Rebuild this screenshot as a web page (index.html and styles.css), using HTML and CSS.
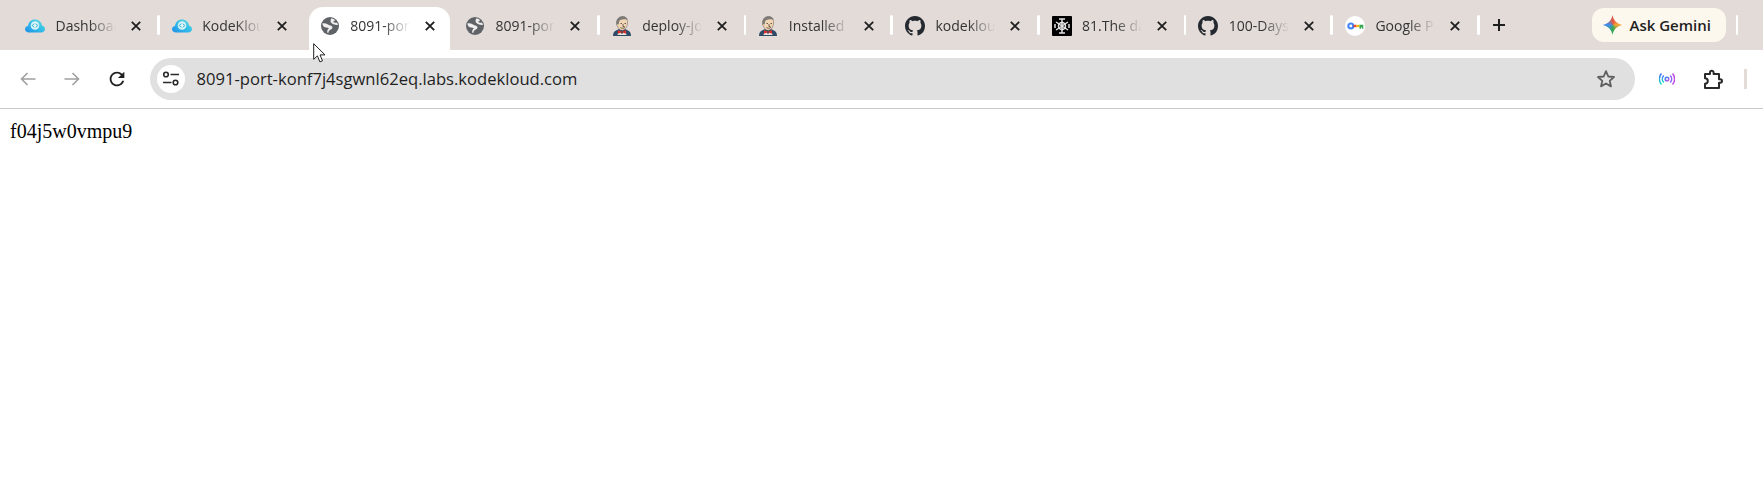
FILE: index.html
```html
<!DOCTYPE html>
<html lang="en">
<head>
<meta charset="utf-8">
<title>8091-port</title>
<link rel="stylesheet" href="styles.css">
</head>
<body>
<svg class="defs" width="0" height="0" aria-hidden="true">
  <defs>
    <linearGradient id="cloudGrad" x1="0" y1="1" x2="1" y2="0">
      <stop offset="0" stop-color="#1d8fe8"/>
      <stop offset="0.55" stop-color="#35c0e8"/>
      <stop offset="1" stop-color="#66dcd8"/>
    </linearGradient>
    <linearGradient id="castGrad" x1="0" y1="0" x2="1" y2="1">
      <stop offset="0" stop-color="#2f8cf0"/>
      <stop offset="0.5" stop-color="#6a6cf0"/>
      <stop offset="1" stop-color="#e05ae0"/>
    </linearGradient>
    <linearGradient id="castGradL" x1="0" y1="0" x2="0" y2="1">
      <stop offset="0" stop-color="#4a70f8"/>
      <stop offset="1" stop-color="#10e0c8"/>
    </linearGradient>
    <symbol id="cloud" viewBox="0 0 20 14">
      <path fill="url(#cloudGrad)" d="M4 13.500C1.800 13.500 0 12 0 10.200 0 8.500 1.300 7.200 3 7 3.300 3.200 6.300 .5 10 .5c3.700 0 6.500 2.500 7 6 1.700.3 3 1.800 3 3.500 0 2-1.800 3.500-4 3.500z"/>
      <circle cx="10" cy="6.500" r="4.300" fill="#d5f2f6"/>
      <path d="M9 4.700 7.400 6.500 9 8.300M11 4.700l1.600 1.800L11 8.300" fill="none" stroke="#2aa8d8" stroke-width="1"/>
    </symbol>
    <symbol id="globe" viewBox="0 0 20 20">
      <circle cx="10" cy="10" r="9" fill="#5f6368"/>
      <path fill="#f0eeee" d="M2.300 7.500C4 6.800 6 7.300 8 8.500c1.700 1 3.500 1.200 4.300 2.300.6 1-.2 2.300-1.500 2.800-1.400.5-2.200 1.500-2.300 3.200-.6 0-1-.2-1.400-.4.100-2 .7-3.500 1.900-4.200C7.200 11.400 5 11.800 3.600 10.500 3 9.800 2.500 8.700 2.300 7.500zM11.500 2.200c1.400.3 2.500.9 3.500 1.800-.3 1-1.300 1.500-2.200 1.600.6.900 2 1.300 4.400 1.200.3.700.6 1.400.7 2.200-2.600.3-5.600-.5-6.900-2.400-.7-1.200-.5-3 .5-4.400z"/>
    </symbol>
    <symbol id="jenkins" viewBox="0 0 20 20">
      <path fill="#2f4a66" d="M1 20c0-3 1-5 4-6l2-1h6l2 1c3 1 4 3 4 6z"/>
      <path fill="#e9e4da" d="M6.500 14.500 10 18l3.500-3.500 1 4.500h-9z"/>
      <path fill="#e0302c" d="M6 14.200 10 15.800l4-1.600v3.600l-4-1.600-4 1.600z"/>
      <path fill="#f0d6b5" stroke="#6a5a50" stroke-width=".5" d="M4.500 8c0-4.500 2.500-7.500 6-7.500 3.500 0 5.500 2.800 5 6.500-.3 3-1.500 7-5 7.300C7.500 14.500 6 12 5.500 10 4.800 10 4.500 9 4.500 8z"/>
      <path fill="#7d7b78" d="M4.500 8.500C3.500 4 6.500.3 10.500.3c2.600 0 4.600 1.400 5.200 3.500C13 2.800 10 3.200 8 4.300 7 5 7 7 6.700 8.300z"/>
      <path fill="none" stroke="#4a3a32" stroke-width=".8" d="M8.500 7.500h1.500M12.500 7.500h1.500M11 8v2.500h1.500M8.500 11.500c1.500 1 3 1 4.500 0"/>
    </symbol>
    <symbol id="github" viewBox="0 0 16 16">
      <path fill="#24292f" d="M8 0C3.580 0 0 3.580 0 8c0 3.540 2.290 6.530 5.470 7.590.4.070.55-.17.55-.38 0-.19-.01-.82-.01-1.490-2.010.37-2.530-.49-2.690-.94-.09-.23-.48-.94-.82-1.130-.28-.15-.68-.52-.01-.53.63-.01 1.080.58 1.230.82.72 1.210 1.870.87 2.330.66.070-.52.28-.87.51-1.070-1.780-.2-3.640-.89-3.640-3.950 0-.87.31-1.590.82-2.150-.08-.2-.36-1.020.08-2.120 0 0 .67-.21 2.200.82.64-.18 1.320-.27 2-.27.68 0 1.360.09 2 .27 1.530-1.040 2.200-.82 2.200-.82.44 1.100.16 1.920.08 2.120.51.56.82 1.270.82 2.150 0 3.070-1.870 3.750-3.650 3.950.29.25.54.73.54 1.480 0 1.070-.01 1.930-.01 2.200 0 .21.15.46.55.38A8.013 8.013 0 0 0 16 8c0-4.420-3.580-8-8-8z"/>
    </symbol>
    <symbol id="x" viewBox="0 0 10 10">
      <path d="M.8.8l8.400 8.400M9.200.8.8 9.200" fill="none" stroke="#1f1f1f" stroke-width="1.800"/>
    </symbol>
  </defs>
</svg>

<header class="strip">
  <div class="tabs">
    <div class="tab"><svg class="fav"><use href="#cloud"/></svg><span class="title">Dashboard</span><span class="close"><svg class="x"><use href="#x"/></svg></span></div>
    <div class="tab no-sep"><svg class="fav"><use href="#cloud"/></svg><span class="title">KodeKloud</span><span class="close"><svg class="x"><use href="#x"/></svg></span></div>
    <div class="tab active no-sep"><svg class="fav"><use href="#globe"/></svg><span class="title">8091-port</span><span class="close"><svg class="x"><use href="#x"/></svg></span></div>
    <div class="tab"><svg class="fav"><use href="#globe"/></svg><span class="title">8091-port</span><span class="close"><svg class="x"><use href="#x"/></svg></span></div>
    <div class="tab"><svg class="fav"><use href="#jenkins"/></svg><span class="title">deploy-job</span><span class="close"><svg class="x"><use href="#x"/></svg></span></div>
    <div class="tab"><svg class="fav"><use href="#jenkins"/></svg><span class="title">Installed</span><span class="close"><svg class="x"><use href="#x"/></svg></span></div>
    <div class="tab"><svg class="fav"><use href="#github"/></svg><span class="title">kodekloud</span><span class="close"><svg class="x"><use href="#x"/></svg></span></div>
    <div class="tab">
      <svg class="fav" viewBox="0 0 20 20">
        <rect width="20" height="20" rx="1" fill="#000"/>
        <g fill="none" stroke="#e4e4e4" stroke-width="1.500">
          <path d="M10 3v14M4 6l12 8M16 6 4 14"/>
          <circle cx="10" cy="10" r="3.500"/>
          <path d="M7 3h6M3 8v4M17 8v4M7 17h6"/>
        </g>
      </svg>
      <span class="title">81.The day</span><span class="close"><svg class="x"><use href="#x"/></svg></span>
    </div>
    <div class="tab"><svg class="fav"><use href="#github"/></svg><span class="title">100-Days</span><span class="close"><svg class="x"><use href="#x"/></svg></span></div>
    <div class="tab">
      <svg class="fav" viewBox="0 0 20 20">
        <circle cx="10" cy="10" r="10" fill="#fff"/>
        <circle cx="5.800" cy="10" r="2.500" fill="none" stroke="#4285f4" stroke-width="2.200"/>
        <path d="M8.500 8.800h3v2.400h-3z" fill="#ea4335"/>
        <path d="M11.500 8.800h3v2.400h-3z" fill="#fbbc04"/>
        <path d="M14.500 8.800h3.800v4h-1.500v-1.600h-.8v1.600h-1.500z" fill="#34a853"/>
      </svg>
      <span class="title">Google Pass</span><span class="close"><svg class="x"><use href="#x"/></svg></span>
    </div>
  </div>
  <span class="new-tab">
    <svg viewBox="0 0 14 14" width="14" height="14"><path d="M7 1v12M1 7h12" stroke="#1f1f1f" stroke-width="2" fill="none"/></svg>
  </span>
  <button class="gemini"><span class="spark"></span><span>Ask Gemini</span></button>
  <span class="strip-sep"></span>
</header>

<nav class="toolbar">
  <span class="tool back">
    <svg viewBox="0 0 16 14" width="16" height="14"><path d="M15.500 7H1.500M7.500 1 1.500 7l6 6" fill="none" stroke="#a0a0a0" stroke-width="1.600"/></svg>
  </span>
  <span class="tool forward">
    <svg viewBox="0 0 16 14" width="16" height="14"><path d="M.5 7h14M8.500 1l6 6-6 6" fill="none" stroke="#a0a0a0" stroke-width="1.600"/></svg>
  </span>
  <span class="tool reload">
    <svg viewBox="0 0 24 24" width="22" height="22"><path fill="#1f1f1f" d="M17.650 6.350A7.958 7.958 0 0 0 12 4c-4.420 0-7.990 3.580-7.990 8s3.570 8 7.990 8c3.730 0 6.840-2.550 7.730-6h-2.080A5.990 5.990 0 0 1 12 18c-3.310 0-6-2.690-6-6s2.690-6 6-6c1.660 0 3.140.69 4.220 1.780L13 11h7V4l-2.350 2.350z"/></svg>
  </span>
  <div class="omnibox">
    <span class="site-info">
      <svg viewBox="0 0 18 16" width="18" height="16" fill="none" stroke="#2a2a2a" stroke-width="1.600">
        <circle cx="4" cy="3.500" r="2.300"/><path d="M8.500 3.500H17M1 11.500h8.500"/><circle cx="13.500" cy="11.500" r="2.300"/>
      </svg>
    </span>
    <span class="url">8091-port-konf7j4sgwnl62eq.labs.kodekloud.com</span>
    <svg class="star" viewBox="0 0 20 20" width="20" height="20"><path d="M10 2.200l2.300 5.300 5.700.5-4.300 3.800 1.300 5.600L10 14.500 5 17.400l1.300-5.600L2 8l5.700-.5z" fill="none" stroke="#5f5f5f" stroke-width="1.800" stroke-linejoin="round"/></svg>
  </div>
  <span class="tool cast">
    <svg viewBox="0 0 16 14" width="16" height="14" fill="none" stroke-width="1.500">
      <circle cx="8" cy="7" r="1.800" stroke="url(#castGrad)"/>
      <path d="M4.800 3.500a5 5 0 0 0 0 7" stroke="url(#castGradL)"/>
      <path d="M2.500 1.500a8.200 8.200 0 0 0 0 11" stroke="url(#castGradL)"/>
      <path d="M11.200 3.500a5 5 0 0 1 0 7" stroke="#8a60f4"/>
      <path d="M13.500 1.500a8.200 8.200 0 0 1 0 11" stroke="#c04ae8"/>
    </svg>
  </span>
  <span class="tool puzzle">
    <svg viewBox="0 0 22 21" width="22" height="21"><path d="M2 5h5V3.500a1.800 1.800 0 0 1 3.600 0V5h5.400v5.200h1.200a1.800 1.800 0 0 1 0 3.600H16V19H2v-4.300c1.600 0 2.800-1.100 2.800-2.700S3.600 9.300 2 9.300z" fill="none" stroke="#2a2a2a" stroke-width="2" stroke-linejoin="round"/></svg>
  </span>
  <span class="tool-sep"></span>
</nav>

<main class="page">f04j5w0vmpu9</main>

<svg class="cursor" viewBox="0 0 13 20" width="13" height="20"><path d="M.7.700v15.600l3.700-3.400 2.500 6 2.600-1.100-2.500-5.900h5z" fill="#fff" stroke="#222" stroke-width="1"/></svg>
</body>
</html>
```

FILE: styles.css
```css
* { box-sizing: border-box; }
html, body { margin: 0; padding: 0; background: #fff; overflow: hidden; }
body { position: relative; height: 492px; }
.defs { position: absolute; }

.strip {
  display: flex;
  align-items: flex-start;
  height: 50px;
  padding: 7px 0 0 12px;
  background: #e2dbd8;
  font-family: "Open Sans", "Noto Sans", sans-serif;
}
.tabs { display: flex; }
.tab {
  position: relative;
  display: flex;
  align-items: center;
  width: 146.67px;
  height: 43px;
  padding: 0 0 6px 13px;
  flex: none;
}
.tab::after {
  content: "";
  position: absolute;
  right: -1px;
  top: 8px;
  width: 2.500px;
  height: 20px;
  border-radius: 2px;
  background: #fff;
}
.tab.no-sep::after, .tab.active::after { display: none; }
.tab.active {
  background: #fff;
  border-radius: 14px 14px 0 0;
  margin: 0 2px 0 4px;
  width: 140.67px;
  padding-left: 10.500px;
}
.fav { width: 20px; height: 20px; flex: none; display: block; }
.title {
  width: 60px;
  margin: 0 10px 0 10.500px;
  flex: none;
  font-size: 14px;
  color: #333;
  white-space: nowrap;
  overflow: hidden;
  -webkit-mask-image: linear-gradient(to right, #000 55%, transparent 100%);
  mask-image: linear-gradient(to right, #000 55%, transparent 100%);
}
.close {
  display: flex;
  align-items: center;
  justify-content: center;
  width: 20px;
  flex: none;
}
.x { width: 10px; height: 10px; display: block; }
.new-tab {
  display: flex;
  width: 14px;
  height: 36px;
  align-items: center;
  margin-left: 13.500px;
  flex: none;
}
.gemini {
  display: flex;
  align-items: center;
  gap: 7px;
  width: 134px;
  height: 34px;
  margin: 1px 0 0 auto;
  padding: 0 0 0 11px;
  border: 0;
  border-radius: 12px;
  background: #fcf8ee;
  font: 600 15px "Open Sans", sans-serif;
  color: #1f1f1f;
  white-space: nowrap;
}
.spark {
  width: 20px;
  height: 20px;
  flex: none;
  background: conic-gradient(from 0deg, #e8563f, #f4a63a 25%, #34a853 50%, #3e8ef0 75%, #e8563f);
  clip-path: path("M10 0C11 5.500 14.500 9 20 10 14.500 11 11 14.500 10 20 9 14.500 5.500 11 0 10 5.500 9 9 5.500 10 0Z");
}
.strip-sep {
  width: 2.500px;
  height: 20px;
  margin: 8px 25px 0 10px;
  border-radius: 2px;
  background: #fff;
  flex: none;
}

.toolbar {
  display: flex;
  align-items: center;
  height: 59px;
  padding: 0 17px 0 0;
  background: #fff;
  border-top-left-radius: 12px;
  border-bottom: 1px solid #c9c9c9;
}
.tool { display: flex; align-items: center; justify-content: center; flex: none; }
.back { width: 16px; margin-left: 20px; }
.forward { width: 16px; margin-left: 28px; }
.reload { width: 22px; margin-left: 26px; }
.omnibox {
  display: flex;
  align-items: center;
  flex: none;
  width: 1485px;
  height: 42px;
  margin-left: 22px;
  padding: 0 19px 0 7px;
  border-radius: 21px;
  background: #e0e0e0;
}
.site-info {
  display: flex;
  align-items: center;
  justify-content: center;
  width: 28px;
  height: 28px;
  flex: none;
  border-radius: 50%;
  background: #fff;
}
.url {
  margin-left: 11.500px;
  padding-bottom: 2px;
  flex: 1;
  font-family: "Open Sans", sans-serif;
  font-size: 16.600px;
  color: #1f1f1f;
  white-space: nowrap;
}
.star { flex: none; }
.cast { width: 16px; margin-left: 24px; }
.puzzle { width: 22px; margin-left: 28px; }
.tool-sep {
  width: 2.500px;
  height: 20px;
  margin-left: 19px;
  background: #e2dbd8;
  flex: none;
}

.page {
  padding: 11px 10px;
  font-family: "Liberation Serif", "Times New Roman", serif;
  font-size: 20px;
  color: #000;
}
.cursor { position: absolute; left: 313px; top: 43px; }
```
